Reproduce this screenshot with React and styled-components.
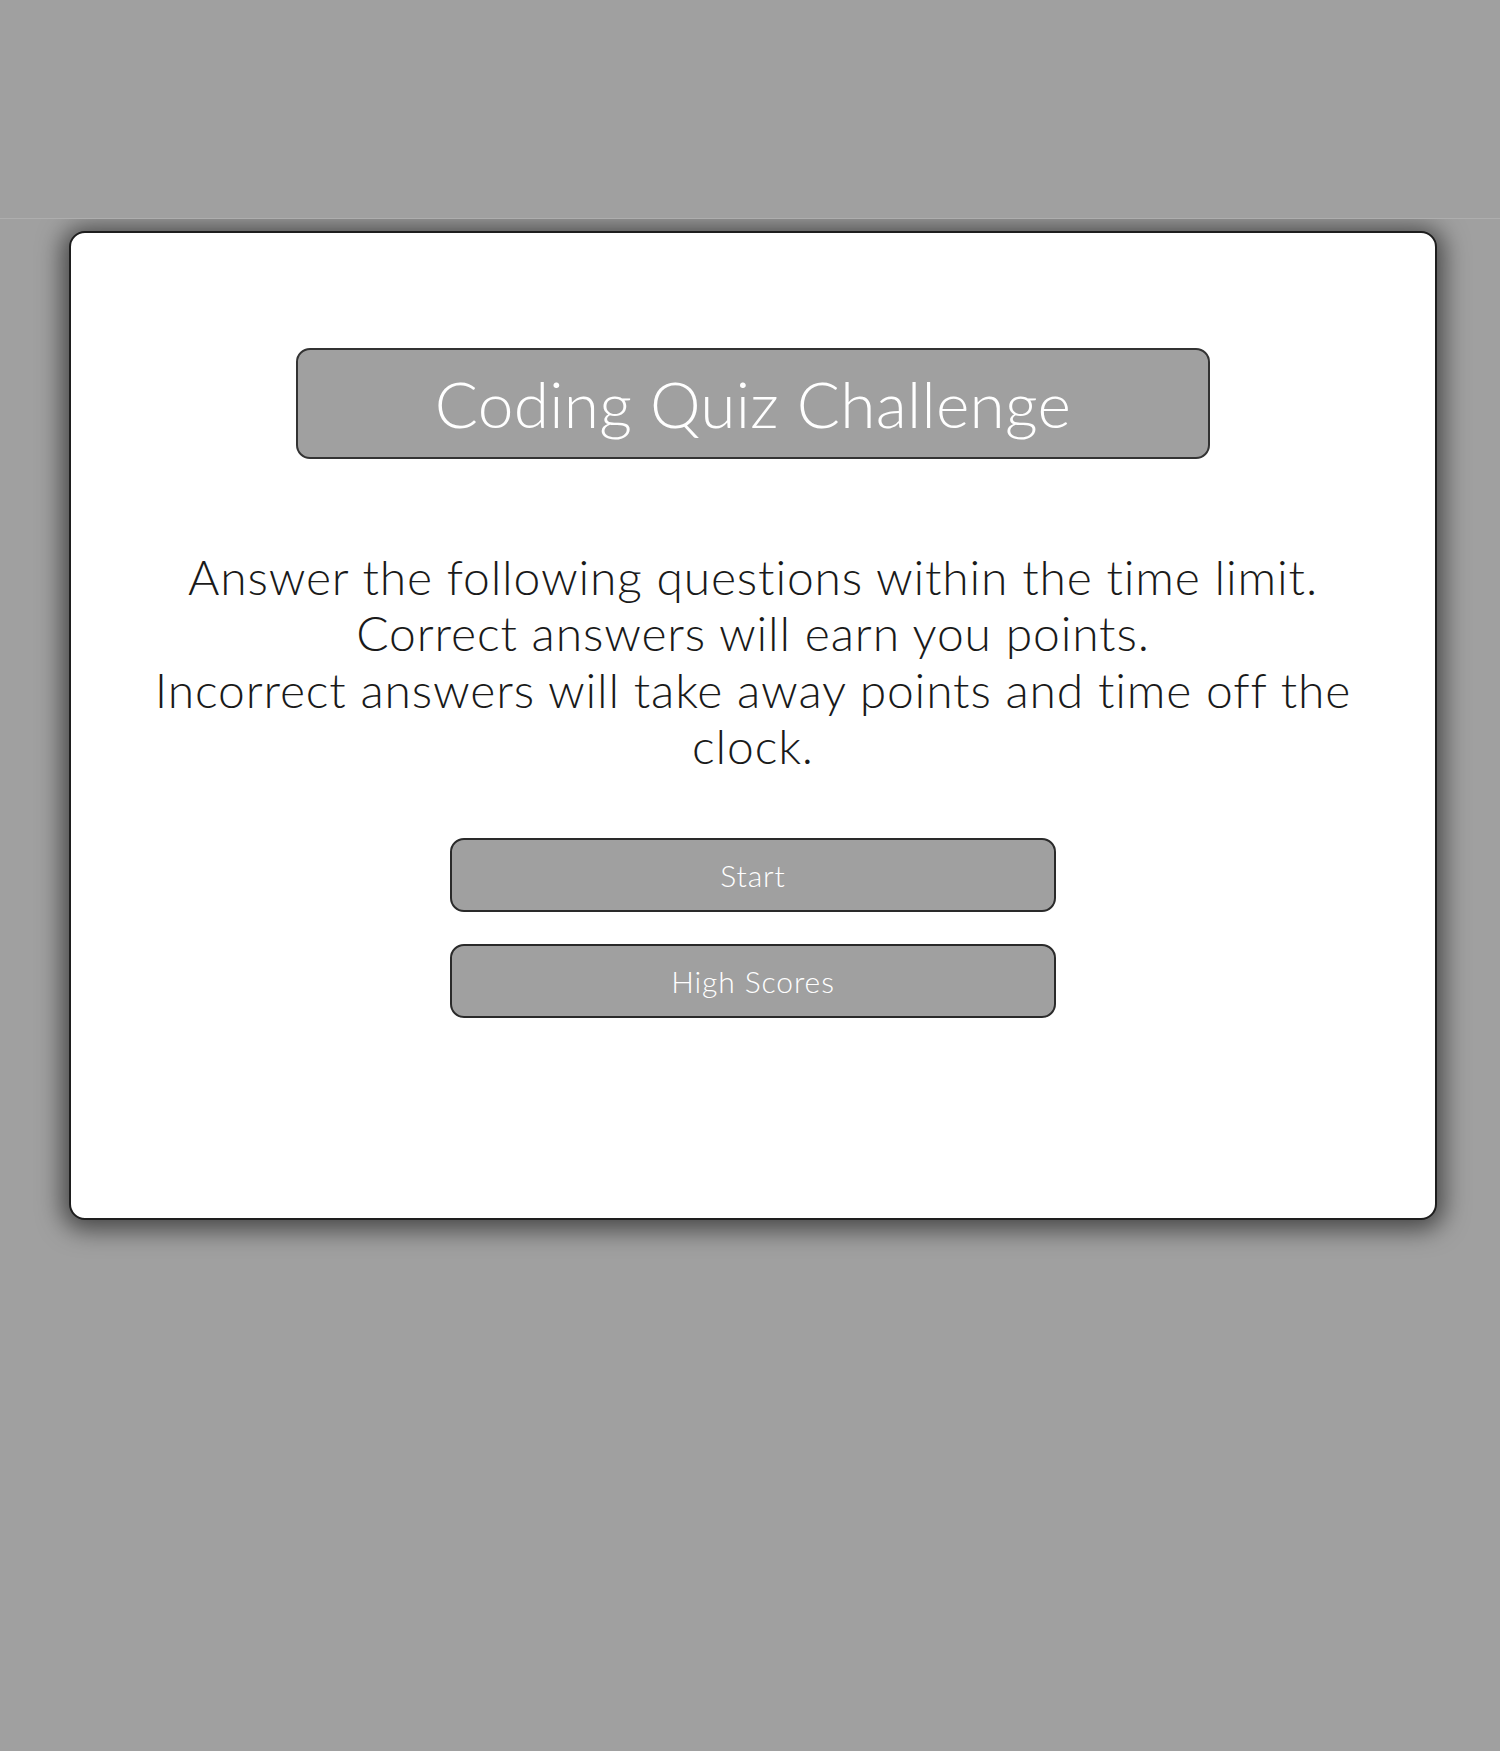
import React from "react";
import styled, { createGlobalStyle } from "styled-components";

const Global = createGlobalStyle`
  html, body { margin: 0; padding: 0; background: #a0a0a0; }
  body { font-family: "Lato", "Liberation Sans", sans-serif; min-height: 1751px; }
`;

const Header = styled.header`
  height: 218px;
  background: #a0a0a0;
  border-bottom: 1px solid #aeaeae;
`;

const Main = styled.main`
  overflow: hidden;
  padding: 12px 63px 60px 69px;
`;

const Card = styled.section`
  box-sizing: border-box;
  width: 1368px;
  height: 989px;
  background: #fff;
  border: 2px solid #1e1e1e;
  border-radius: 16px;
  box-shadow: 0 3px 24px 7px rgba(0, 0, 0, 0.55);
  display: flex;
  flex-direction: column;
  align-items: center;
  padding: 115px 50px 0;
`;

const TitleBox = styled.h1`
  box-sizing: border-box;
  width: 914px;
  height: 111px;
  margin: 0;
  display: flex;
  align-items: center;
  justify-content: center;
  background: #a0a0a0;
  border: 2px solid #333;
  border-radius: 14px;
  color: #fff;
  font-weight: 300;
  font-size: 64px;
  letter-spacing: 0.3px;
  line-height: 1;
`;

const Intro = styled.p`
  margin: 90px 0 63px;
  text-align: center;
  color: #1a1a1a;
  font-weight: 300;
  font-size: 48px;
  letter-spacing: 0.85px;
  line-height: 56.4px;
`;

const ButtonStack = styled.div`
  display: flex;
  flex-direction: column;
  gap: 32px;
`;

const Button = styled.button`
  box-sizing: border-box;
  width: 606px;
  height: 74px;
  background: #a0a0a0;
  border: 2px solid #2a2a2a;
  border-radius: 14px;
  color: #fff;
  font-family: inherit;
  font-weight: 300;
  font-size: 30px;
  letter-spacing: 0.9px;
  cursor: pointer;
`;

export default function App() {
  return (
    <>
      <Global />
      <Header />
      <Main>
        <Card>
          <TitleBox>Coding Quiz Challenge</TitleBox>
          <Intro>
            Answer the following questions within the time limit.
            <br />
            Correct answers will earn you points.
            <br />
            Incorrect answers will take away points and time off the clock.
          </Intro>
          <ButtonStack>
            <Button>Start</Button>
            <Button>High Scores</Button>
          </ButtonStack>
        </Card>
      </Main>
    </>
  );
}
